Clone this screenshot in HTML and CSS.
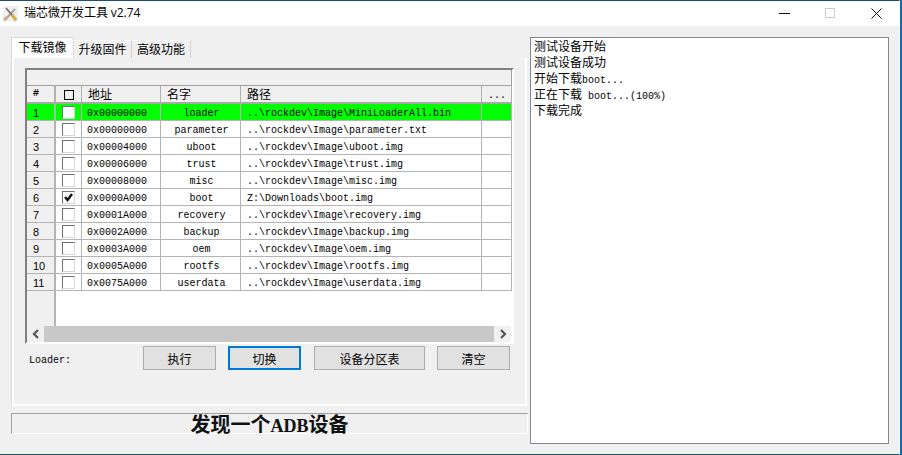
FILE: index.html
```html
<!DOCTYPE html>
<html lang="zh">
<head>
<meta charset="utf-8">
<title>瑞芯微开发工具 v2.74</title>
<link rel="stylesheet" href="styles.css">
</head>
<body>
<div class="window">
  <header class="titlebar">
    <svg class="app-icon" width="15" height="16" viewBox="0 0 15 16">
      <rect width="15" height="16" fill="#f0f0f0"/>
      <path d="M2 14 L12 3" stroke="#a8a8a8" stroke-width="2"/>
      <path d="M1 14 L4 11" stroke="#c8b878" stroke-width="3"/>
      <path d="M3 2 L13 14" stroke="#6a6a6a" stroke-width="1.6"/>
      <path d="M9 9 L13 14" stroke="#d9b030" stroke-width="3"/>
    </svg>
    <div class="title">瑞芯微开发工具 <span class="version">v2.74</span></div>
    <div class="controls">
      <span class="ctl ctl-min"></span>
      <span class="ctl ctl-max"></span>
      <svg class="ctl-close" width="11" height="11" viewBox="0 0 11 11"><path d="M0.5 0.5 L10.5 10.5 M10.5 0.5 L0.5 10.5" stroke="#111" stroke-width="1"/></svg>
    </div>
  </header>
  <main class="content">
    <section class="left">
      <nav class="tabs">
        <div class="tab active">下载镜像</div>
        <div class="tab">升级固件</div>
        <div class="tab last">高级功能</div>
      </nav>
      <div class="pane">
        <div class="grid-frame">
          <div class="band"></div>
          <table class="grid">
            <colgroup><col class="c-num"><col class="c-chk"><col class="c-addr"><col class="c-name"><col class="c-path"><col class="c-more"></colgroup>
            <thead>
              <tr><th class="num m">#</th><th><span class="head-box"></span></th><th class="l">地址</th><th class="l">名字</th><th class="l">路径</th><th class="dots m">...</th></tr>
            </thead>
            <tbody>
              <tr class="sel"><td class="num">1</td><td><span class="box"></span></td><td class="addr">0x00000000</td><td class="name">loader</td><td class="path">..\rockdev\Image\MiniLoaderAll.bin</td><td></td></tr>
              <tr><td class="num">2</td><td><span class="box"></span></td><td class="addr">0x00000000</td><td class="name">parameter</td><td class="path">..\rockdev\Image\parameter.txt</td><td></td></tr>
              <tr><td class="num">3</td><td><span class="box"></span></td><td class="addr">0x00004000</td><td class="name">uboot</td><td class="path">..\rockdev\Image\uboot.img</td><td></td></tr>
              <tr><td class="num">4</td><td><span class="box"></span></td><td class="addr">0x00006000</td><td class="name">trust</td><td class="path">..\rockdev\Image\trust.img</td><td></td></tr>
              <tr><td class="num">5</td><td><span class="box"></span></td><td class="addr">0x00008000</td><td class="name">misc</td><td class="path">..\rockdev\Image\misc.img</td><td></td></tr>
              <tr><td class="num">6</td><td><span class="box"><svg width="11" height="11" viewBox="0 0 11 11"><path d="M2 5 L4.5 8 L9 2" fill="none" stroke="#111" stroke-width="2.4"/></svg></span></td><td class="addr">0x0000A000</td><td class="name">boot</td><td class="path">Z:\Downloads\boot.img</td><td></td></tr>
              <tr><td class="num">7</td><td><span class="box"></span></td><td class="addr">0x0001A000</td><td class="name">recovery</td><td class="path">..\rockdev\Image\recovery.img</td><td></td></tr>
              <tr><td class="num">8</td><td><span class="box"></span></td><td class="addr">0x0002A000</td><td class="name">backup</td><td class="path">..\rockdev\Image\backup.img</td><td></td></tr>
              <tr><td class="num">9</td><td><span class="box"></span></td><td class="addr">0x0003A000</td><td class="name">oem</td><td class="path">..\rockdev\Image\oem.img</td><td></td></tr>
              <tr><td class="num">10</td><td><span class="box"></span></td><td class="addr">0x0005A000</td><td class="name">rootfs</td><td class="path">..\rockdev\Image\rootfs.img</td><td></td></tr>
              <tr><td class="num">11</td><td><span class="box"></span></td><td class="addr">0x0075A000</td><td class="name">userdata</td><td class="path">..\rockdev\Image\userdata.img</td><td></td></tr>
            </tbody>
          </table>
          <div class="filler"><div class="filler-head"></div></div>
          <div class="scrollbar">
            <div class="arrow"><svg width="8" height="10" viewBox="0 0 8 10"><path d="M6 1 L2 5 L6 9" fill="none" stroke="#555" stroke-width="2.2"/></svg></div>
            <div class="thumb"></div>
            <div class="arrow"><svg width="8" height="10" viewBox="0 0 8 10"><path d="M2 1 L6 5 L2 9" fill="none" stroke="#555" stroke-width="2.2"/></svg></div>
          </div>
        </div>
        <div class="actions">
          <span class="loader">Loader:</span>
          <button class="btn">执行</button>
          <button class="btn focus">切换</button>
          <button class="btn wide">设备分区表</button>
          <button class="btn">清空</button>
        </div>
      </div>
      <div class="status"><span>发现一个<b class="status-lat">ADB</b>设备</span></div>
    </section>
    <aside class="log">
      <div class="log-line">测试设备开始</div>
      <div class="log-line">测试设备成功</div>
      <div class="log-line">开始下载<span class="lat">boot...</span></div>
      <div class="log-line">正在下载<span class="lat"> boot...(100%)</span></div>
      <div class="log-line">下载完成</div>
    </aside>
  </main>
</div>
</body>
</html>
```

FILE: styles.css
```css
* { box-sizing: border-box; }
html, body { margin: 0; padding: 0; }
body {
  width: 902px;
  height: 455px;
  background: #0f6cb5;
  overflow: hidden;
  font-family: "Noto Sans CJK SC", "Liberation Sans", sans-serif;
  font-size: 12px;
  color: #000;
}
.window {
  width: 900px;
  height: 455px;
  display: flex;
  flex-direction: column;
  background: #f0f0f0;
  border-top: 1px solid #1c4f6e;
  border-bottom: 1px solid #0e5a6b;
  border-right: 1px solid #fafafa;
}
.titlebar {
  height: 25px;
  flex: none;
  background: #fff;
  display: flex;
  align-items: center;
  padding-left: 3px;
}
.app-icon { flex: none; margin-top: 1px; }
.title {
  margin-left: 6px;
  line-height: 22px;
  margin-bottom: 2px;
  white-space: nowrap;
}
.version { font-family: "Open Sans", "Noto Sans", sans-serif; font-size: 12px; }
.controls {
  margin-left: auto;
  display: flex;
  align-items: center;
  padding-right: 17px;
}
.ctl { display: block; }
.ctl-min { width: 11px; height: 1px; background: #111; margin-right: 35px; }
.ctl-max { width: 10px; height: 10px; border: 1px solid #ccc; margin: -1px 36px 0 0; }
.ctl-close { display: block; }

.content {
  flex: 1;
  min-height: 0;
  display: flex;
  padding: 11px 0 10px 11px;
}
.left { width: 519px; flex: none; display: flex; flex-direction: column; }

.tabs { display: flex; align-items: flex-end; height: 21px; position: relative; z-index: 1; }
.tab {
  width: 58px;
  height: 18px;
  line-height: 16px;
  text-align: center;
  background: #f0f0f0;
  border-top: 1px solid #fafafa;
  border-right: 1px solid #d0d0d0;
  white-space: nowrap;
}
.tab.last { width: 59px; }
.tab.active {
  width: 63px;
  height: 21px;
  line-height: 17px;
  background: #fff;
  border: 1px solid #d9d9d9;
  border-bottom: 0;
}
.pane {
  margin-left: 1px;
  width: 515px;
  height: 348px;
  flex: none;
  background: #f0f0f0;
  border: 2px solid #fff;
  border-top: 0;
  padding: 10px 0 0 11px;
  box-shadow: -1px 0 0 #dcdcdc;
}

.grid-frame {
  width: 489px;
  height: 276px;
  display: flex;
  flex-direction: column;
  border-style: solid;
  border-width: 2px;
  border-color: #808080 #fff #fff #808080;
  background: #fff;
}
.band {
  height: 16px;
  flex: none;
  background: #f0f0f0;
  border-right: 1px solid #a0a0a0;
  border-bottom: 1px solid #a0a0a0;
}
.grid {
  width: 485px;
  table-layout: fixed;
  border-collapse: separate;
  border-spacing: 0;
  flex: none;
}
.c-num { width: 29px; }
.c-chk { width: 26px; }
.c-addr { width: 79px; }
.c-name { width: 80px; }
.c-path { width: 241px; }
.c-more { width: 30px; }
.grid th {
  height: 18px;
  padding: 0;
  font-weight: 400;
  background: #f0f0f0;
  border-right: 1px solid #b0b0b0;
  border-bottom: 2px solid #a8a8a8;
  text-align: left;
  line-height: 16px;
  white-space: nowrap;
}
.grid th.l { padding-left: 6px; }
.grid th.num { padding-left: 6px; border-right-width: 2px; }
.grid th.m { font-family: "Liberation Mono", monospace; font-size: 10px; font-weight: 700; }
.grid th.dots { padding: 3px 0 0 6px; line-height: 13px; font-weight: 400; }
.head-box {
  display: block;
  width: 10px;
  height: 10px;
  margin: 1px 0 0 8px;
  border: 1px solid #000;
}
.grid td {
  height: 17px;
  padding: 3px 0 0;
  vertical-align: top;
  font-family: "Liberation Mono", monospace;
  font-size: 10px;
  line-height: 13px;
  background: #fff;
  border-right: 1px solid #b4b4b4;
  border-bottom: 1px solid #b4b4b4;
  white-space: nowrap;
}
.grid td.num {
  background: #f0f0f0;
  padding-left: 6px;
  font-family: "Liberation Sans", sans-serif;
  font-size: 11px;
  border-right-width: 2px;
}
.grid td.addr { padding-left: 5px; }
.grid td.name { text-align: center; padding-left: 2px; }
.grid td.path { padding-left: 6px; }
.grid .sel td { background: #00ff00; }
.box {
  display: block;
  width: 13px;
  height: 13px;
  margin: -1px 0 0 6px;
  background: #fff;
  border: 1px solid;
  border-color: #707070 #d8d8d8 #d8d8d8 #707070;
}
.box svg { display: block; }
.filler { flex: 1; min-height: 0; }
.filler-head {
  width: 29px;
  height: 100%;
  background: #f0f0f0;
  border-right: 2px solid #b4b4b4;
}
.scrollbar {
  height: 16px;
  flex: none;
  display: flex;
  width: 484px;
  background: #f0f0f0;
}
.arrow {
  width: 17px;
  flex: none;
  display: flex;
  align-items: center;
  justify-content: center;
}
.thumb { flex: 1; background: #c8c8c8; }

.actions {
  display: flex;
  align-items: flex-start;
  gap: 12px;
  width: 485px;
  margin-top: 2px;
  padding-left: 4px;
}
.loader {
  flex: 1;
  font-family: "Liberation Mono", monospace;
  font-size: 10px;
  line-height: 16px;
  padding-top: 7px;
}
.btn {
  width: 73px;
  height: 24px;
  padding: 0;
  background: #e1e1e1;
  border: 1px solid #adadad;
  font: inherit;
  font-size: 12px;
  color: #000;
}
.btn.focus { border: 2px solid #0078d7; }
.btn.wide { width: 111px; margin-left: 1px; }

.status {
  margin-top: 7px;
  width: 517px;
  height: 21px;
  flex: none;
  border-style: solid;
  border-width: 1px;
  border-color: #a0a0a0 #fff #fff #a0a0a0;
  text-align: center;
  font-size: 20px;
  font-weight: 700;
  line-height: 20px;
  color: #111;
  white-space: nowrap;
}
.status-lat { font-family: "Liberation Serif", serif; font-size: 18px; }

.log {
  width: 359px;
  flex: none;
  background: #fff;
  border: 1px solid #828790;
  padding: 0 3px;
}
.log-line { height: 16px; line-height: 15px; white-space: pre; }
.lat { font-family: "Liberation Mono", monospace; font-size: 10px; }
```
